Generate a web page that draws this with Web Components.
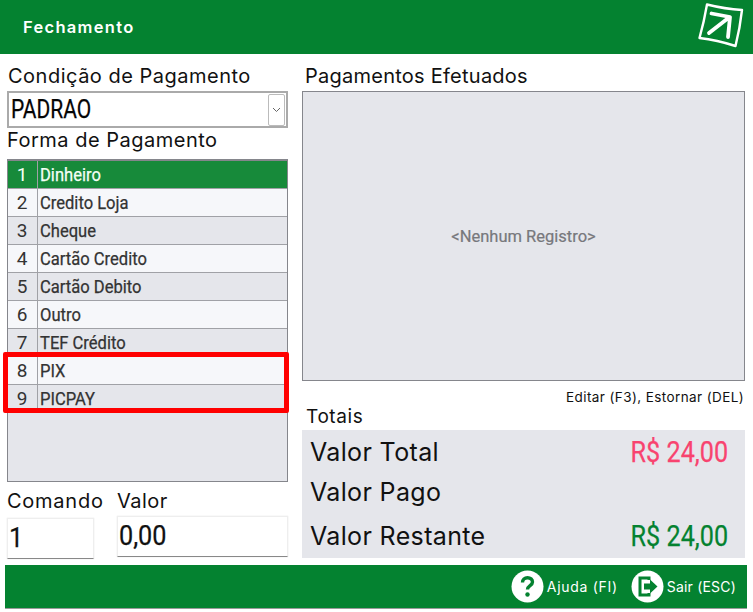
<!DOCTYPE html>
<html lang="pt-BR"><head><meta charset="utf-8"><title>Fechamento</title>
<style>
html,body{margin:0;padding:0;background:#fff}
body{width:753px;height:612px;overflow:hidden;font-family:Inter,"Noto Sans",sans-serif;color:#111}
</style></head><body>
<fech-app></fech-app>
<script>
const def=(name,html,init)=>customElements.define(name,class extends HTMLElement{
  constructor(){super();this.attachShadow({mode:'open'}).innerHTML=html}
  connectedCallback(){init&&init(this)}
});
def('cond-text',`<style>:host{display:inline-block;white-space:nowrap;font-family:Roboto,sans-serif;-webkit-text-stroke:.25px currentColor;transform:scaleX(var(--sx,.88));transform-origin:var(--ox,left center)}</style><slot></slot>`);
def('poppins-label',`<style>:host{display:block;white-space:nowrap;font-family:Inter,sans-serif;font-size:var(--fs,20px);line-height:var(--lh,22px);letter-spacing:var(--ls,.5px);color:#111}</style><slot></slot>`);
def('app-header',`<style>:host{display:flex;align-items:center;justify-content:space-between;height:54px;background:#048230;color:#fff;padding:0 0 0 23px;box-sizing:border-box}
span{font:600 16.500px Inter,sans-serif;letter-spacing:1.300px;padding-bottom:1px}svg{display:block}</style>
<span><slot></slot></span>
<svg width="56" height="50" viewBox="0 0 56 50" fill="none" stroke="#fff" stroke-linecap="round" stroke-linejoin="round"><path d="M10 2.500Q28 7 45 8 43 26 38.500 44 20 38 2.500 36 7 20 10 2.500Z" stroke-width="2.400"/><path d="M12 31 32 15.500M14.500 11.500 33 15 31 35" stroke-width="3.800"/></svg>`);
def('select-box',`<style>:host{display:flex;align-items:center;justify-content:space-between;height:37px;box-sizing:border-box;border:2px solid #aaa;background:#fff;padding:0 1px 0 2px;font-size:25px;font-weight:400;color:#050505}
i{display:flex;align-items:center;justify-content:center;width:17px;height:32px;box-sizing:border-box;border:1px solid #bbb;border-radius:2px}</style>
<cond-text style="--sx:.84"><slot></slot></cond-text>
<i><svg width="9" height="6" viewBox="0 0 9 6" fill="none" stroke="#666"><path d="M1 1l3.500 3.500L8 1"/></svg></i>`);
def('pay-row',`<style>:host{display:grid;grid-template-columns:30px 1fr;height:28px;box-sizing:border-box;border-bottom:1px solid #a0a1a6;background:var(--bg,#e5e6eb);color:var(--fg,#333);font:400 18px/27px Roboto,sans-serif}
:host([alt]){--bg:#f6f7fa}:host([sel]){--bg:#178a3a;--fg:#f4fff6}
b{font-weight:400;font-size:19px;text-align:center;border-right:1px solid #a0a1a6;padding-right:1px}
div{padding-left:2px}</style><b></b><div><cond-text style="--sx:.92"><slot></slot></cond-text></div>`,el=>{el.shadowRoot.querySelector('b').textContent=el.getAttribute('n')});
def('pay-list',`<style>:host{display:block;position:relative;height:323px;box-sizing:border-box;border:1px solid #85868c;border-top-width:2px;background:#e5e6eb}
.mark{position:absolute;left:-5px;right:-2px;top:191px;height:61px;box-sizing:border-box;border:5px solid #f00;border-radius:2px}</style><slot></slot><div class="mark"></div>`);
def('num-field',`<style>:host{display:block;box-sizing:border-box;height:41px;background:#fff;border:1px solid #eee;border-bottom:1px solid #888;box-shadow:0 0 1px #ddd;font:400 28px/38px Roboto,sans-serif;color:#111;padding-left:1px}</style><cond-text style="--sx:.9"><slot></slot></cond-text>`);
def('empty-panel',`<style>:host{display:flex;align-items:center;justify-content:center;height:290px;box-sizing:border-box;border:1px solid #85868c;background:#e5e6eb;font:400 16.500px Roboto,sans-serif;-webkit-text-stroke:.2px currentColor;color:#77787c}</style><span><slot></slot></span>`);
def('total-row',`<style>:host{display:flex;align-items:center;justify-content:space-between;box-sizing:border-box;height:var(--h,44px);padding:var(--pt,0) 17px 0 8px;font:25px Inter,sans-serif;letter-spacing:.35px;color:#111}
.v{font:400 30px Roboto,sans-serif;letter-spacing:0;color:var(--c,#111);--sx:.84;--ox:right center;margin-top:-2px}</style>
<span><slot></slot></span><cond-text class="v"><slot name="v"></slot></cond-text>`);
def('foot-btn',`<style>:host{display:flex;align-items:center;gap:3px;color:#fff;font:14px Inter,sans-serif;letter-spacing:var(--ls,.7px);white-space:nowrap}svg{display:block}</style><slot name="i"></slot><slot></slot>`);
def('app-footer',`<style>:host{display:flex;justify-content:flex-end;align-items:center;gap:13px;height:44px;margin:0 6px 0 5px;box-sizing:border-box;background:#048230;border-bottom:1px solid #9a9a9a;padding:0 11px 0 0}</style><slot></slot>`);
def('fech-app',`<style>
:host{display:flex;flex-direction:column;height:612px}
.main{display:grid;grid-template-columns:281px 443px;column-gap:14px;padding:11px 0 0 7px;height:511px;box-sizing:border-box}
.l,.r{display:flex;flex-direction:column}
.sel{margin-top:4px}.forma{margin:1px 0 8px}
.bot{display:grid;grid-template-columns:87px 171px;column-gap:23px;margin-top:8px}
.cmd{margin-top:6px}.val{margin-top:4px}
.pe{margin-left:3px;--ls:.25px}.ed{--fs:13.500px;--lh:17px;--ls:.4px;text-align:right;margin:8px 1px 0 0}
.tt{margin:0 0 2px 4px;--lh:22px;--ls:.6px;--fs:19px}
.box{background:#e5e6eb;height:128px}
</style>
<app-header>Fechamento</app-header>
<div class="main">
 <div class="l">
  <poppins-label style="margin-left:1px">Condição de Pagamento</poppins-label>
  <select-box class="sel">PADRAO</select-box>
  <poppins-label class="forma">Forma de Pagamento</poppins-label>
  <pay-list>
   <pay-row n="1" sel>Dinheiro</pay-row><pay-row n="2" alt>Credito Loja</pay-row><pay-row n="3">Cheque</pay-row>
   <pay-row n="4" alt>Cartão Credito</pay-row><pay-row n="5">Cartão Debito</pay-row><pay-row n="6" alt>Outro</pay-row>
   <pay-row n="7">TEF Crédito</pay-row><pay-row n="8" alt>PIX</pay-row><pay-row n="9">PICPAY</pay-row>
  </pay-list>
  <div class="bot">
   <div><poppins-label style="--ls:.75px">Comando</poppins-label><num-field class="cmd">1</num-field></div>
   <div><poppins-label>Valor</poppins-label><num-field class="val">0,00</num-field></div>
  </div>
 </div>
 <div class="r">
  <poppins-label class="pe">Pagamentos Efetuados</poppins-label>
  <empty-panel style="margin-top:4px">&lt;Nenhum Registro&gt;</empty-panel>
  <poppins-label class="ed">Editar (F3), Estornar (DEL)</poppins-label>
  <poppins-label class="tt">Totais</poppins-label>
  <div class="box">
   <total-row style="--c:#f8436f;--h:44px">Valor Total<span slot="v">R$ 24,00</span></total-row>
   <total-row style="--h:36px">Valor Pago</total-row>
   <total-row style="--c:#048230;--h:48px;--pt:4px">Valor Restante<span slot="v">R$ 24,00</span></total-row>
  </div>
 </div>
</div>
<app-footer>
 <foot-btn><svg slot="i" width="33" height="33" viewBox="0 0 33 33"><circle cx="16.500" cy="16.500" r="16" fill="#fff"/><path d="M11.500 12.500c0-3 2.200-4.800 5-4.800 2.900 0 5 1.800 5 4.300 0 3.800-5 3.600-5 7.600" fill="none" stroke="#048230" stroke-width="3.400"/><circle cx="16.500" cy="24.500" r="2.200" fill="#048230"/></svg>Ajuda (FI)</foot-btn>
 <foot-btn style="--ls:.2px"><svg slot="i" width="33" height="33" viewBox="0 0 33 33"><circle cx="16.500" cy="16.500" r="16" fill="#fff"/><path d="M18 10V8H9v17h9v-2" fill="none" stroke="#048230" stroke-width="3"/><path d="M13 13.500h6V9.500l7.500 7-7.500 7v-4h-6Z" fill="#048230"/></svg>Sair (ESC)</foot-btn>
</app-footer>`);
</script>
</body></html>
